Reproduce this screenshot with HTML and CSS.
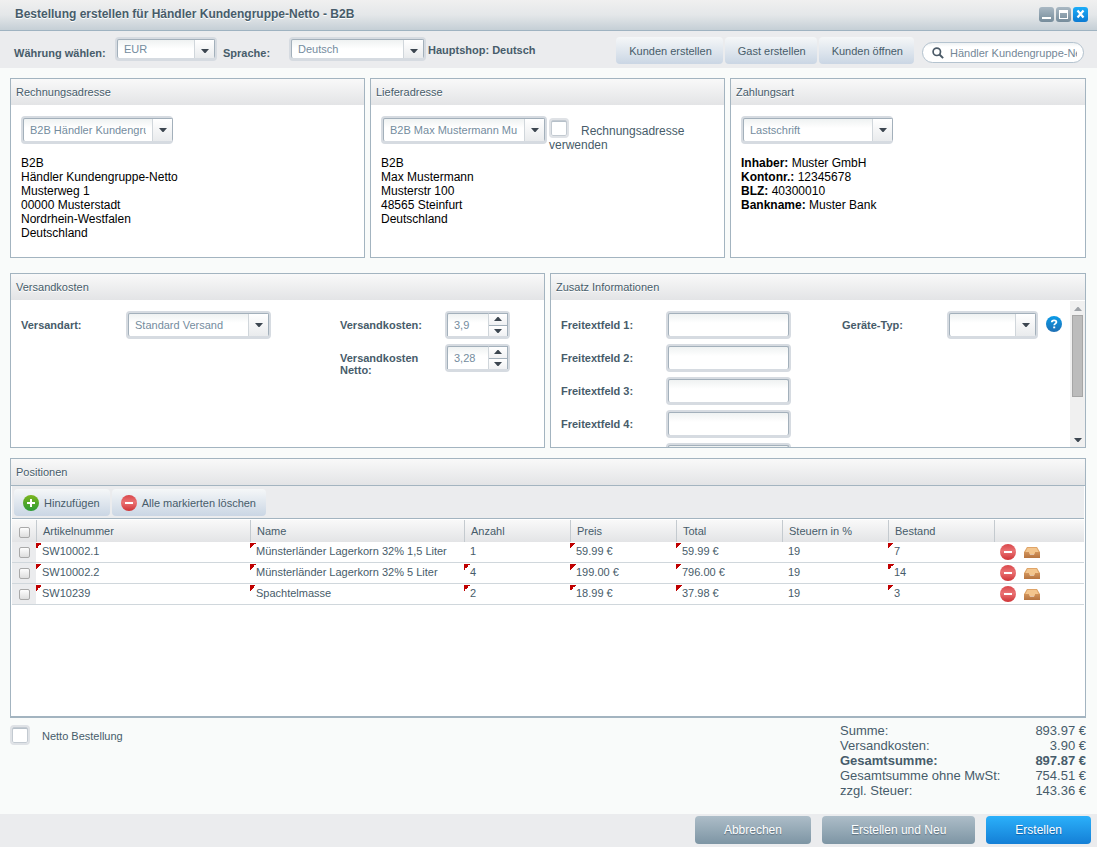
FILE: index.html
```html
<!DOCTYPE html>
<html lang="de">
<head>
<meta charset="utf-8">
<meta name="viewport" content="width=device-width, initial-scale=1">
<title>Bestellung erstellen</title>
<link rel="stylesheet" href="styles.css">
</head>
<body>
<svg class="sprite" aria-hidden="true">
  <defs>
    <linearGradient id="g-red" x1="0" y1="0" x2="0" y2="1"><stop offset="0" stop-color="#d9474b"/><stop offset=".45" stop-color="#ea7374"/><stop offset="1" stop-color="#cf3336"/></linearGradient>
    <linearGradient id="g-green" x1="0" y1="0" x2="0" y2="1"><stop offset="0" stop-color="#7cb51f"/><stop offset="1" stop-color="#2c9b35"/></linearGradient>
    <linearGradient id="g-blue" x1="0" y1="0" x2="0" y2="1"><stop offset="0" stop-color="#0a9be8"/><stop offset="1" stop-color="#1f6fb4"/></linearGradient>
    <linearGradient id="g-box" x1="0" y1="0" x2="0" y2="1"><stop offset="0" stop-color="#d2945b"/><stop offset="1" stop-color="#b67440"/></linearGradient>
    <symbol id="minus" viewBox="0 0 16 16"><circle cx="8" cy="8" r="8" fill="url(#g-red)"/><path d="M4 7h8v2H4z" fill="#fff"/></symbol>
    <symbol id="plus" viewBox="0 0 16 16"><circle cx="8" cy="8" r="8" fill="url(#g-green)"/><path d="M7 4h2v3h3v2H9v3H7V9H4V7h3z" fill="#fff"/></symbol>
    <symbol id="inbox" viewBox="0 0 16 16"><path d="M3 3h10l3 5v1H0V8z" fill="#dfa468"/><path d="M3.500 4h9l2 4H11v2H5V8H1.500z" fill="#f3c58d"/><path d="M0 8h5v1l1 1.500h4L11 9V8h5v6H0z" fill="url(#g-box)"/></symbol>
    <symbol id="down" viewBox="0 0 8 4"><path d="M0 0h8L4.500 4h-1z" fill="#3c4650"/></symbol>
    <symbol id="up" viewBox="0 0 8 4"><path d="M0 4h8L4.500 0h-1z" fill="#3c4650"/></symbol>
    <symbol id="help" viewBox="0 0 16 16"><circle cx="8" cy="8" r="8" fill="url(#g-blue)"/><path d="M5.800 6.200C5.800 3.600 10.500 3.700 10.400 6.100 10.300 7.600 8.200 7.700 8.200 9.300" fill="none" stroke="#fff" stroke-width="1.800"/><path d="M7.200 10.500h2v1.800h-2z" fill="#fff"/></symbol>
  </defs>
</svg>

<div class="window">
  <header class="titlebar">
    <h1 class="titlebar__title">Bestellung erstellen für Händler Kundengruppe-Netto - B2B</h1>
    <div class="titlebar__tools">
      <button class="tool" type="button" aria-label="Minimieren"><svg viewBox="0 0 15 15"><path d="M3 10h9v2H3z" fill="#fff"/></svg></button>
      <button class="tool" type="button" aria-label="Maximieren"><svg viewBox="0 0 15 15"><path d="M3 3h9v9H3zM4 6v5h7V6z" fill="#fff" fill-rule="evenodd"/></svg></button>
      <button class="tool tool--close" type="button" aria-label="Schließen"><svg viewBox="0 0 15 15"><path d="M4.500 3.500l6 7M10.500 3.500l-6 7" stroke="#fff" stroke-width="2.200"/></svg></button>
    </div>
  </header>

  <div class="toolbar">
    <label class="label toolbar__label" for="currency">Währung wählen:</label>
    <span class="combo combo--small combo--currency"><select id="currency"><option>EUR</option></select><span class="combo__trigger"><svg><use href="#down"/></svg></span></span>
    <label class="label toolbar__label toolbar__label--language" for="language">Sprache:</label>
    <span class="combo combo--small combo--language"><select id="language"><option>Deutsch</option></select><span class="combo__trigger"><svg><use href="#down"/></svg></span></span>
    <span class="label toolbar__shop">Hauptshop: Deutsch</span>
    <div class="toolbar__actions">
      <button class="btn" type="button">Kunden erstellen</button>
      <button class="btn" type="button">Gast erstellen</button>
      <button class="btn" type="button">Kunden öffnen</button>
    </div>
    <div class="search">
      <svg viewBox="0 0 12 12"><circle cx="4.800" cy="4.800" r="3.700" fill="none" stroke="#4b5a67" stroke-width="1.700"/><path d="M7.500 7.500l3.600 3.600" stroke="#4b5a67" stroke-width="2"/></svg>
      <input type="text" aria-label="Kunden suchen" value="Händler Kundengruppe-Netto">
    </div>
  </div>

  <main class="content">
    <div class="row row--thirds">
      <section class="panel">
        <h2 class="panel__title">Rechnungsadresse</h2>
        <div class="panel__body panel__body--address">
          <div class="address__top"><span class="combo combo--cut combo--address"><select aria-label="Rechnungsadresse"><option>B2B Händler Kundengruppe-Netto</option></select><span class="combo__trigger"><svg><use href="#down"/></svg></span></span></div>
          <address class="address">B2B<br>Händler Kundengruppe-Netto<br>Musterweg 1<br>00000 Musterstadt<br>Nordrhein-Westfalen<br>Deutschland</address>
        </div>
      </section>
      <section class="panel">
        <h2 class="panel__title">Lieferadresse</h2>
        <div class="panel__body panel__body--address">
          <div class="address__top">
            <span class="combo combo--delivery"><select aria-label="Lieferadresse"><option>B2B Max Mustermann Mu</option></select><span class="combo__trigger"><svg><use href="#down"/></svg></span></span>
            <label class="address__same"><input class="check" type="checkbox">Rechnungsadresse verwenden</label>
          </div>
          <address class="address">B2B<br>Max Mustermann<br>Musterstr 100<br>48565 Steinfurt<br>Deutschland</address>
        </div>
      </section>
      <section class="panel">
        <h2 class="panel__title">Zahlungsart</h2>
        <div class="panel__body panel__body--address">
          <div class="address__top"><span class="combo combo--cut combo--address"><select aria-label="Zahlungsart"><option>Lastschrift</option></select><span class="combo__trigger"><svg><use href="#down"/></svg></span></span></div>
          <div class="address"><b>Inhaber:</b> Muster GmbH<br><b>Kontonr.:</b> 12345678<br><b>BLZ:</b> 40300010<br><b>Bankname:</b> Muster Bank</div>
        </div>
      </section>
    </div>

    <div class="row row--halves">
      <section class="panel">
        <h2 class="panel__title">Versandkosten</h2>
        <div class="panel__body form form--shipping">
          <div class="form__column">
            <div class="form__field"><label class="label form__label" for="shipping">Versandart:</label><span class="combo combo--shipping"><select id="shipping"><option>Standard Versand</option></select><span class="combo__trigger"><svg><use href="#down"/></svg></span></span></div>
          </div>
          <div class="form__column">
            <div class="form__field"><label class="label form__label" for="cost">Versandkosten:</label><span class="spinner"><input id="cost" type="text" inputmode="decimal" value="3,9"><span class="spinner__buttons"><button type="button" aria-label="Erhöhen"><svg><use href="#up"/></svg></button><button type="button" aria-label="Verringern"><svg><use href="#down"/></svg></button></span></span></div>
            <div class="form__field"><label class="label form__label" for="net">Versandkosten Netto:</label><span class="spinner"><input id="net" type="text" inputmode="decimal" value="3,28"><span class="spinner__buttons"><button type="button" aria-label="Erhöhen"><svg><use href="#up"/></svg></button><button type="button" aria-label="Verringern"><svg><use href="#down"/></svg></button></span></span></div>
          </div>
        </div>
      </section>
      <section class="panel">
        <h2 class="panel__title">Zusatz Informationen</h2>
        <div class="scroller">
          <div class="form form--extra">
            <div class="form__column">
              <div class="form__field"><label class="label form__label" for="f1">Freitextfeld 1:</label><span class="textfield"><input id="f1" type="text"></span></div>
              <div class="form__field"><label class="label form__label" for="f2">Freitextfeld 2:</label><span class="textfield"><input id="f2" type="text"></span></div>
              <div class="form__field"><label class="label form__label" for="f3">Freitextfeld 3:</label><span class="textfield"><input id="f3" type="text"></span></div>
              <div class="form__field"><label class="label form__label" for="f4">Freitextfeld 4:</label><span class="textfield"><input id="f4" type="text"></span></div>
              <div class="form__field"><span class="form__label"></span><span class="textfield"><input type="text" aria-label="Freitextfeld"></span></div>
            </div>
            <div class="form__column">
              <div class="form__field"><label class="label form__label" for="device">Geräte-Typ:</label><span class="combo combo--device"><select id="device"><option></option></select><span class="combo__trigger"><svg><use href="#down"/></svg></span></span><svg class="icon form__help"><use href="#help"/></svg></div>
            </div>
          </div>
          <div class="scrollbar" aria-hidden="true">
            <svg class="scrollbar__up"><use href="#up"/></svg>
            <div class="scrollbar__track"><div class="scrollbar__thumb"></div></div>
            <svg><use href="#down"/></svg>
          </div>
        </div>
      </section>
    </div>

    <section class="panel positions">
      <h2 class="panel__title positions__title">Positionen</h2>
      <div class="positions__tools">
        <button class="btn btn--icon" type="button"><svg class="icon"><use href="#plus"/></svg>Hinzufügen</button>
        <button class="btn btn--icon" type="button"><svg class="icon"><use href="#minus"/></svg>Alle markierten löschen</button>
      </div>
      <div class="positions__grid">
        <table class="grid">
          <colgroup><col class="col-check"><col class="col-wide"><col class="col-wide"><col class="col-num"><col class="col-num"><col class="col-num"><col class="col-num"><col class="col-num"><col></colgroup>
          <thead>
            <tr><th><input class="tick" type="checkbox" aria-label="Alle auswählen"></th><th>Artikelnummer</th><th>Name</th><th>Anzahl</th><th>Preis</th><th>Total</th><th>Steuern in %</th><th>Bestand</th><th></th></tr>
          </thead>
          <tbody>
            <tr><td><input class="tick" type="checkbox" aria-label="SW10002.1 auswählen"></td><td class="dirty">SW10002.1</td><td class="dirty">Münsterländer Lagerkorn 32% 1,5 Liter</td><td>1</td><td class="dirty">59.99 €</td><td class="dirty">59.99 €</td><td>19</td><td class="dirty">7</td><td class="actions"><button type="button" aria-label="Löschen"><svg class="icon"><use href="#minus"/></svg></button><button type="button" aria-label="Artikel öffnen"><svg class="icon"><use href="#inbox"/></svg></button></td></tr>
            <tr><td><input class="tick" type="checkbox" aria-label="SW10002.2 auswählen"></td><td class="dirty">SW10002.2</td><td class="dirty">Münsterländer Lagerkorn 32% 5 Liter</td><td class="dirty">4</td><td class="dirty">199.00 €</td><td class="dirty">796.00 €</td><td>19</td><td class="dirty">14</td><td class="actions"><button type="button" aria-label="Löschen"><svg class="icon"><use href="#minus"/></svg></button><button type="button" aria-label="Artikel öffnen"><svg class="icon"><use href="#inbox"/></svg></button></td></tr>
            <tr><td><input class="tick" type="checkbox" aria-label="SW10239 auswählen"></td><td class="dirty">SW10239</td><td class="dirty">Spachtelmasse</td><td class="dirty">2</td><td class="dirty">18.99 €</td><td class="dirty">37.98 €</td><td>19</td><td class="dirty">3</td><td class="actions"><button type="button" aria-label="Löschen"><svg class="icon"><use href="#minus"/></svg></button><button type="button" aria-label="Artikel öffnen"><svg class="icon"><use href="#inbox"/></svg></button></td></tr>
          </tbody>
        </table>
      </div>
    </section>

    <div class="summary">
      <label class="summary__net"><input class="check" type="checkbox"><span>Netto Bestellung</span></label>
      <table class="totals">
        <tbody>
          <tr><th>Summe:</th><td>893.97 €</td></tr>
          <tr><th>Versandkosten:</th><td>3.90 €</td></tr>
          <tr class="totals__main"><th>Gesamtsumme:</th><td>897.87 €</td></tr>
          <tr><th>Gesamtsumme ohne MwSt:</th><td>754.51 €</td></tr>
          <tr><th>zzgl. Steuer:</th><td>143.36 €</td></tr>
        </tbody>
      </table>
    </div>
  </main>

  <footer class="footer">
    <button class="action action--cancel" type="button">Abbrechen</button>
    <button class="action action--again" type="button">Erstellen und Neu</button>
    <button class="action action--primary" type="button">Erstellen</button>
  </footer>
</div>
</body>
</html>
```
FILE: styles.css
```css
* { box-sizing: border-box; }

body {
  margin: 0;
  color: #475c6a;
  font: 11px/14px "Liberation Sans", Arial, sans-serif;
}

button, input, select { margin: 0; font: inherit; color: inherit; }
button { border: 0; cursor: pointer; }
svg { display: block; flex: none; }

.sprite { position: absolute; width: 0; height: 0; }
.icon { width: 16px; height: 16px; }
.label { font-weight: bold; }

.window {
  display: flex;
  flex-direction: column;
  min-height: 100vh;
  background: #f9fbfa;
}

/* Title bar */
.titlebar {
  display: flex;
  align-items: center;
  justify-content: space-between;
  height: 31px;
  padding: 0 9px 2px 15px;
  border-bottom: 1px solid #9fb3c1;
  background: linear-gradient(#f0f0f0, #e4e7e9 50%, #c5cfd6);
}
.titlebar__title { margin: 0; font-size: 12px; text-shadow: 0 1px 0 #fff; }
.titlebar__tools { display: flex; gap: 2px; }
.tool {
  width: 15px;
  height: 15px;
  padding: 0;
  border-radius: 3px;
  background: linear-gradient(#a9b8c3, #768c9b);
}
.tool--close { background: linear-gradient(#1badf9, #0b7ad2); }

/* Top toolbar */
.toolbar {
  display: flex;
  align-items: flex-start;
  height: 37px;
  padding: 6px 13px 0 14px;
  background: #ebecee;
}
.toolbar__label { width: 101px; padding-top: 9px; }
.toolbar__label--language { width: 66px; margin-left: 6px; }
.toolbar__shop { margin-left: 2px; padding-top: 6px; }
.toolbar__actions { display: flex; gap: 2px; margin-left: auto; }
.btn {
  height: 27px;
  padding: 1px 11px 0 13px;
  border-radius: 4px;
  background: linear-gradient(#f5f7f8, #cad6e4);
}
.search {
  display: flex;
  align-items: center;
  width: 162px;
  height: 21px;
  margin: 5px 0 0 8px;
  padding: 0 6px 0 9px;
  border: 1px solid #b4c3cf;
  border-radius: 11px;
  background: linear-gradient(#eef1f3, #fff 4px);
}
.search svg { width: 12px; height: 12px; }
.search input {
  flex: 1;
  min-width: 0;
  height: 19px;
  margin-left: 6px;
  padding: 0;
  border: 0;
  outline: 0;
  background: none;
  color: #748797;
}

/* Framed fields */
.combo, .textfield, .spinner {
  display: grid;
  height: 28px;
  border: 2px solid #d6dbe1;
  border-bottom-width: 3px;
  border-radius: 4px;
  background: #d6dbe1;
  color: #748c9e;
}
.combo select, .textfield input, .spinner input {
  width: 100%;
  min-width: 0;
  border: 1px solid #a3b0bb;
  border-bottom-color: #d6dbe1;
  border-bottom-width: 0;
  border-radius: 2px;
  outline: 0;
  background: linear-gradient(#eff2f2, #fff 9px);
}
.combo select {
  grid-area: 1 / 1;
  appearance: none;
  padding: 0 26px 0 6px;
}
.combo__trigger {
  grid-area: 1 / 1;
  justify-self: end;
  display: grid;
  place-items: center;
  width: 20px;
  margin: 1px 1px 0 0;
  border-left: 1px solid #d0d6db;
  background: linear-gradient(#fff, #e9ebed);
  pointer-events: none;
}
.combo__trigger svg, .spinner svg, .scrollbar svg { width: 8px; height: 4px; }
.combo--small { height: 24px; }
.combo--small select { padding-bottom: 0; }
.combo--small .combo__trigger { padding-top: 4px; }
.combo--cut { border-right-width: 0; }
.combo--currency { width: 102px; }
.combo--language { width: 137px; }
.combo--address { width: 152px; }
.combo--delivery { width: 166px; }
.combo--shipping { width: 145px; }
.combo--device { width: 91px; }
.textfield { width: 125px; }
.spinner { grid-template-columns: 1fr 20px; width: 65px; }
.spinner input { padding: 0 0 0 6px; border-right: 0; border-radius: 2px 0 0 0; }
.spinner__buttons {
  display: grid;
  grid-template-rows: 1fr 1fr;
  gap: 1px;
  border: 1px solid #a3b0bb;
  border-left-color: #d0d6db;
  border-bottom: 0;
  background: #a3b0bb;
}
.spinner button {
  display: grid;
  place-items: center;
  min-height: 0;
  padding: 0;
  background: linear-gradient(#fff, #f0f1f3);
}

.check {
  appearance: none;
  width: 20px;
  height: 20px;
  margin-right: 12px;
  border: 2px solid #dfe2e6;
  border-radius: 4px;
  background: #fff;
  box-shadow: inset 0 0 0 1px #c3cad1, inset 0 2px 0 #b6c0c9;
}
.tick {
  appearance: none;
  display: block;
  width: 11px;
  height: 11px;
  margin: 0 auto;
  border: 1px solid #a9a9a9;
  border-radius: 2px;
  background: linear-gradient(#fdfdfd, #dedede);
}

/* Panels */
.content {
  display: flex;
  flex: 1;
  flex-direction: column;
  padding: 10px 11px 0 10px;
}
.row { display: grid; gap: 5px; }
.row--thirds { grid-template-columns: minmax(0, 355fr) minmax(0, 355fr) minmax(0, 356fr); margin-bottom: 15px; }
.row--halves { grid-template-columns: minmax(0, 535fr) minmax(0, 536fr); margin-bottom: 10px; }
.panel { border: 1px solid #a3b4c0; background: #fff; }
.panel__title {
  height: 27px;
  margin: 0;
  padding: 6px 5px;
  border-bottom: 1px solid #fff;
  background: linear-gradient(#f9f9f9, #e3e4e6);
  font-size: 11px;
  font-weight: normal;
  text-shadow: 0 1px 0 #fff;
}
.panel__body { padding: 10px; }
.panel__body--address { min-height: 151px; }
.address__top { display: flex; gap: 2px; height: 40px; }
.address__same { width: 145px; padding-top: 2px; font-size: 12px; }
.address__same .check { vertical-align: -3px; }
.address { color: #000; font-size: 12px; font-style: normal; }

/* Forms */
.form { display: grid; }
.form--shipping { grid-template-columns: 319fr 194fr; }
.form--extra { flex: 1; grid-template-columns: 281fr 228fr; padding: 10px 0 0 10px; }
.form__field { display: flex; min-height: 28px; margin-bottom: 5px; }
.form__label { flex: none; width: 105px; padding: 8px 20px 0 0; line-height: 12px; }
.form__help { margin: 5px 0 0 8px; }
.scroller { display: flex; height: 146px; overflow: hidden; }
.scrollbar {
  display: flex;
  flex-direction: column;
  align-items: center;
  width: 15px;
  padding: 6px 0 5px;
  background: #f0f0f0;
}
.scrollbar__up { opacity: .45; }
.scrollbar__track { flex: 1; width: 11px; padding-top: 4px; }
.scrollbar__thumb { height: 67%; border: 1px solid #a6a6a6; background: #bcbcbc; }

/* Positions */
.positions {
  display: flex;
  flex: 1;
  flex-direction: column;
  min-height: 200px;
  border-bottom-width: 2px;
}
.positions__title { border-color: #a3b4c0; }
.positions__tools {
  display: flex;
  gap: 2px;
  margin: 0 1px;
  padding: 3px 2px 2px;
  border-bottom: 1px solid #a3b4c0;
  background: #ebecee;
}
.btn--icon {
  display: flex;
  align-items: center;
  gap: 5px;
  padding: 0 10px 0 9px;
}
.positions__grid { flex: 1; padding: 1px; }
.grid { width: 100%; border-collapse: separate; border-spacing: 0; table-layout: fixed; }
.col-check { width: 24px; }
.col-wide { width: 214px; }
.col-num { width: 106px; }
.grid th {
  height: 22px;
  padding: 0 6px;
  border-left: 1px solid #c4cacf;
  background: linear-gradient(#f9f9f9, #e3e4e6);
  font-weight: normal;
  text-align: left;
}
.grid th:first-child { padding: 2px 0 0; border-left: 0; }
.grid td {
  height: 21px;
  padding: 0 6px 2px;
  border-bottom: 1px solid #d0d7dc;
  white-space: nowrap;
}
.grid td:first-child { padding: 1px 0 0; background: #ebecee; }
.grid .dirty {
  background: linear-gradient(135deg, #c00000 50%, transparent 50%) 0 1px / 6px 6px no-repeat;
}
.grid .actions { padding: 0 6px; line-height: 0; }
.actions button { padding: 0; background: none; vertical-align: top; }
.actions button + button { margin-left: 8px; }

/* Summary and footer */
.summary {
  display: flex;
  align-items: flex-start;
  justify-content: space-between;
  min-height: 96px;
  padding-top: 5px;
}
.summary__net { display: flex; align-items: center; padding-top: 2px; }
.summary__net span { padding-top: 2px; }
.totals { width: 246px; border-collapse: collapse; font-size: 13px; line-height: 15px; }
.totals th, .totals td { padding: 0; font-weight: normal; text-align: left; }
.totals td { text-align: right; }
.totals__main th, .totals__main td { font-weight: bold; }
.footer {
  display: flex;
  justify-content: flex-end;
  gap: 11px;
  padding: 2px 6px 3px;
  background: #ebecee;
}
.action {
  height: 28px;
  padding: 0 29px;
  border-radius: 4px;
  background: linear-gradient(#adbdc8, #7d95a4);
  color: #fff;
  font-size: 12px;
  text-shadow: 0 1px 1px #5b6f7e;
}
.action--primary { background: linear-gradient(#2bb0fa, #147fd6); text-shadow: 0 1px 1px #0c5fa5; }
```
